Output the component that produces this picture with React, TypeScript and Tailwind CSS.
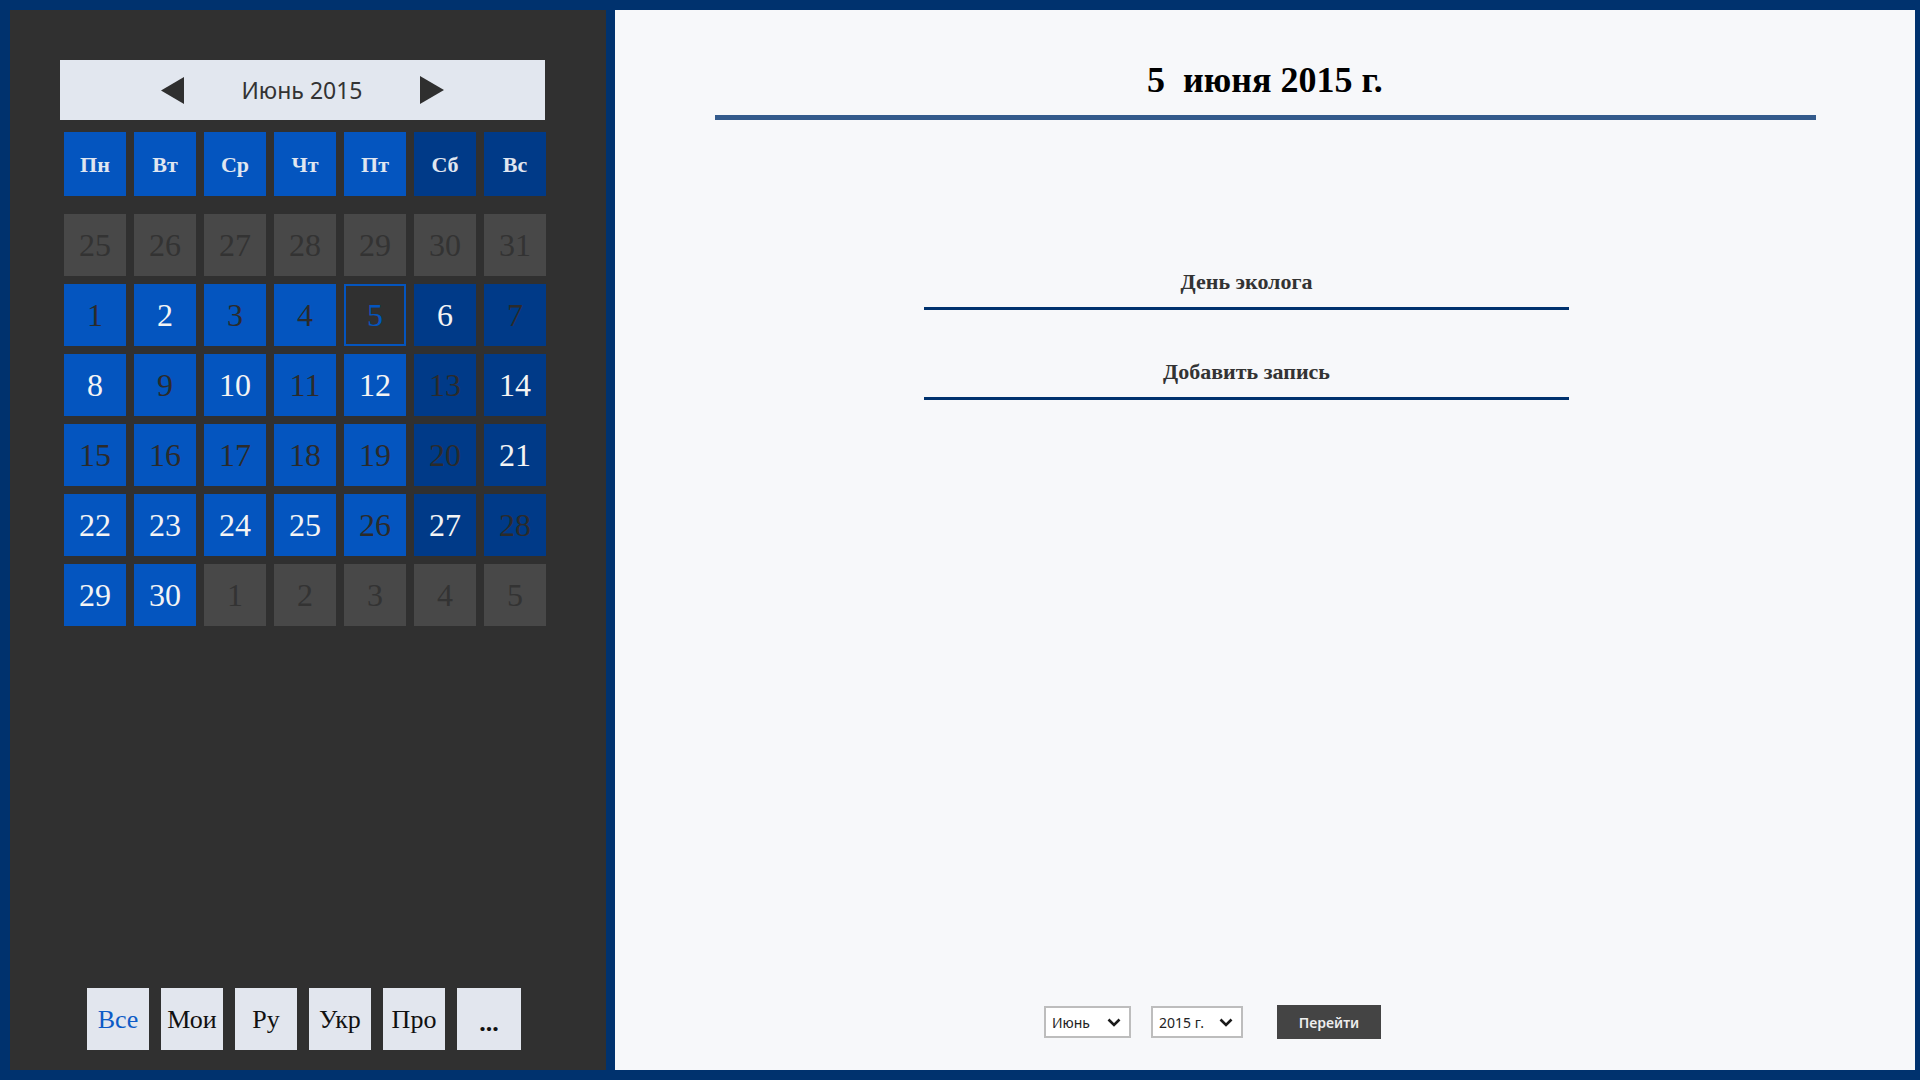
import React from "react";

const serif = "font-['Liberation_Serif','DejaVu_Serif',serif]";
const sans = "font-['Noto_Sans','Open_Sans',sans-serif]";

const dayNames = ["Пн", "Вт", "Ср", "Чт", "Пт", "Сб", "Вс"];

// days whose numbers show in light text
const lightDays = new Set([2, 6, 8, 10, 12, 14, 21, 22, 23, 24, 25, 27, 29, 30]);

type Cell = { day: number; current: boolean };

function buildWeeks(): Cell[][] {
  const cells: Cell[] = [];
  for (let d = 25; d <= 31; d++) cells.push({ day: d, current: false });
  for (let d = 1; d <= 30; d++) cells.push({ day: d, current: true });
  for (let d = 1; d <= 5; d++) cells.push({ day: d, current: false });
  const weeks: Cell[][] = [];
  for (let i = 0; i < cells.length; i += 7) weeks.push(cells.slice(i, i + 7));
  return weeks;
}

function DayCell({ cell, col }: { cell: Cell; col: number }) {
  const weekend = col >= 5;
  if (!cell.current) {
    return (
      <div className="flex h-[62px] w-[62px] items-center justify-center bg-[#484848] text-[32px] text-[#333333]">
        {cell.day}
      </div>
    );
  }
  if (cell.day === 5) {
    return (
      <div className="flex h-[62px] w-[62px] items-center justify-center border-2 border-[#0455bf] bg-[#303030] text-[32px] text-[#0455bf]">
        {cell.day}
      </div>
    );
  }
  return (
    <div
      className={`flex h-[62px] w-[62px] items-center justify-center text-[32px] ${
        weekend ? "bg-[#003a88]" : "bg-[#0455bf]"
      } ${lightDays.has(cell.day) ? "text-[#f4f4f4]" : "text-[#2b2b2b]"}`}
    >
      {cell.day}
    </div>
  );
}

function Chevron() {
  return (
    <svg width="14" height="9" viewBox="0 0 14 9" className="shrink-0">
      <polyline points="1.5,1.5 7,7 12.5,1.5" fill="none" stroke="#1a1a1a" strokeWidth="2.6" />
    </svg>
  );
}

export default function App() {
  const weeks = buildWeeks();
  const tabs = ["Все", "Мои", "Ру", "Укр", "Про"];

  return (
    <div className="flex h-screen w-full gap-[9px] bg-[#00326e] pb-[10px] pl-[10px] pr-[5px] pt-[10px]">
      {/* calendar side */}
      <div className="flex w-[596px] shrink-0 flex-col bg-[#303030] pl-[50px] pt-[50px]">
        <div className={`flex h-[60px] w-[485px] items-center justify-center gap-[57px] bg-[#e2e7ef] ${sans}`}>
          <svg width="23" height="27" viewBox="0 0 23 27">
            <polygon points="23,0 23,27 0,13.5" fill="#2f2f2f" />
          </svg>
          <span className="w-[122px] text-center text-[23px] text-[#333]">Июнь 2015</span>
          <svg width="24" height="28" viewBox="0 0 24 28">
            <polygon points="0,0 0,28 24,14" fill="#2f2f2f" />
          </svg>
        </div>

        <div className={`ml-[4px] mt-[12px] grid w-[482px] grid-cols-7 gap-[8px] ${serif}`}>
          {dayNames.map((d, i) => (
            <div
              key={d}
              className={`flex h-[64px] items-center justify-center text-[22px] font-bold text-[#e0e6f0] ${
                i >= 5 ? "bg-[#003a88]" : "bg-[#0455bf]"
              }`}
            >
              {d}
            </div>
          ))}
        </div>

        <div className={`ml-[4px] mt-[18px] flex w-[482px] flex-col gap-[8px] ${serif}`}>
          {weeks.map((w, wi) => (
            <div key={wi} className="grid grid-cols-7 gap-[8px]">
              {w.map((c, ci) => (
                <DayCell key={ci} cell={c} col={ci} />
              ))}
            </div>
          ))}
        </div>

        <div className={`mb-[20px] ml-[27px] mt-auto flex gap-[12px] ${serif}`}>
          {tabs.map((t, i) => (
            <div
              key={t}
              className={`flex h-[62px] w-[62px] items-center justify-center bg-[#e2e6ee] text-[26px] ${
                i === 0 ? "text-[#0d5bc6]" : "text-[#111]"
              }`}
            >
              {t}
            </div>
          ))}
          <div className="flex h-[62px] w-[64px] items-center justify-center bg-[#e2e6ee] pt-[6px] text-[26px] font-bold text-[#111]">
            ...
          </div>
        </div>
      </div>

      {/* day view */}
      <div className="flex flex-1 flex-col bg-[#f7f8fa]">
        <div className={`flex justify-center pt-[48px] ${serif}`}>
          <h1 className="text-[36px] font-bold leading-[44px] text-black">5&nbsp; июня 2015 г.</h1>
        </div>
        <div className="mx-auto mt-[13px] h-[5px] w-[1101px] bg-[#345b8c]" />

        <div className={`ml-[309px] mt-[100px] flex w-[645px] flex-col ${serif}`}>
          {["День эколога", "Добавить запись"].map((t) => (
            <div
              key={t}
              className="flex h-[90px] items-end justify-center border-b-[3px] border-[#00326e] pb-[11px]"
            >
              <span className="text-[22px] font-bold leading-[28px] text-[#333]">{t}</span>
            </div>
          ))}
        </div>

        <div className={`mb-[31px] ml-[429px] mt-auto flex items-center ${sans}`}>
          <div className="flex h-[32px] w-[87px] items-center justify-between border-2 border-[#bdbdbd] bg-white pl-[6px] pr-[8px] text-[14px] text-[#222]">
            <span>Июнь</span>
            <Chevron />
          </div>
          <div className="ml-[20px] flex h-[32px] w-[92px] items-center justify-between border-2 border-[#bdbdbd] bg-white pl-[6px] pr-[8px] text-[14px] text-[#222]">
            <span>2015 г.</span>
            <Chevron />
          </div>
          <button className="ml-[34px] h-[34px] w-[104px] bg-[#444] text-[14px] font-semibold text-[#eee]">
            Перейти
          </button>
        </div>
      </div>
    </div>
  );
}
